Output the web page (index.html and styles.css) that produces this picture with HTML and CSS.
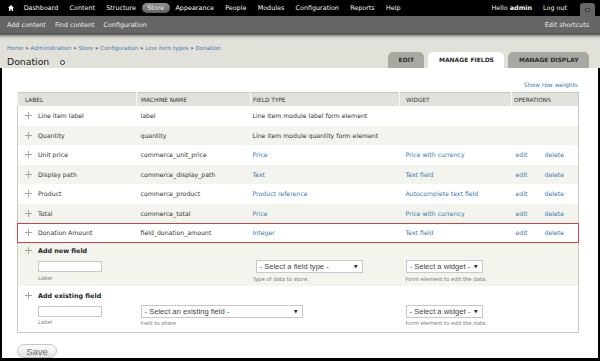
FILE: index.html
```html
<!DOCTYPE html>
<html lang="en">
<head>
  <meta charset="UTF-8">
  <title>Donation | Manage fields</title>
  <link rel="stylesheet" href="styles.css">
</head>
<body>
  <!-- Admin toolbar -->
  <div class="toolbar">
    <ul class="toolbar-menu">
      <li class="home">
        <a href="#"><svg width="6" height="6" viewBox="0 0 6 6"><path d="M3 0 L6 3 H5 V6 H3.6 V4.2 H2.4 V6 H1 V3 H0 Z" fill="#fff"/></svg></a>
      </li>
      <li><a href="#">Dashboard</a></li>
      <li><a href="#">Content</a></li>
      <li><a href="#">Structure</a></li>
      <li class="active"><a href="#">Store</a></li>
      <li><a href="#">Appearance</a></li>
      <li><a href="#">People</a></li>
      <li><a href="#">Modules</a></li>
      <li><a href="#">Configuration</a></li>
      <li><a href="#">Reports</a></li>
      <li><a href="#">Help</a></li>
    </ul>
    <div class="toolbar-user">
      <span>Hello <strong>admin</strong></span>
      <a class="logout" href="#">Log out</a>
      <span class="toggle"><span class="toggle-icon"></span></span>
    </div>
  </div>

  <div class="shortcuts">
    <div class="shortcut-links">
      <a href="#">Add content</a>
      <a href="#">Find content</a>
      <a href="#">Configuration</a>
    </div>
    <a href="#">Edit shortcuts</a>
  </div>

  <div class="branding">
    <div>
      <div class="breadcrumb">
        <a href="#">Home</a> <span class="sep">»</span> <a href="#">Administration</a> <span class="sep">»</span> <a href="#">Store</a> <span class="sep">»</span> <a href="#">Configuration</a> <span class="sep">»</span> <a href="#">Line item types</a> <span class="sep">»</span> <a href="#">Donation</a>
      </div>
      <h1>Donation <span class="gear"></span></h1>
    </div>
    <ul class="tabs">
      <li><a href="#">Edit</a></li>
      <li class="active"><a href="#">Manage fields</a></li>
      <li><a href="#">Manage display</a></li>
    </ul>
  </div>

  <div class="page">
    <div class="row-weights"><a href="#">Show row weights</a></div>

    <table class="fields">
      <colgroup>
        <col style="width: 119px">
        <col style="width: 114px">
        <col style="width: 149px">
        <col style="width: 112px">
        <col style="width: 29px">
        <col style="width: 38px">
      </colgroup>
      <thead>
        <tr>
          <th>Label</th>
          <th>Machine name</th>
          <th>Field type</th>
          <th>Widget</th>
          <th colspan="2">Operations</th>
        </tr>
      </thead>
      <tbody>
        <tr class="odd">
          <td><span class="handle"></span>Line item label</td>
          <td>label</td>
          <td>Line item module label form element</td>
          <td></td>
          <td></td>
          <td></td>
        </tr>
        <tr class="even">
          <td><span class="handle"></span>Quantity</td>
          <td>quantity</td>
          <td>Line item module quantity form element</td>
          <td></td>
          <td></td>
          <td></td>
        </tr>
        <tr class="odd">
          <td><span class="handle"></span>Unit price</td>
          <td>commerce_unit_price</td>
          <td><a href="#">Price</a></td>
          <td><a href="#">Price with currency</a></td>
          <td><a href="#">edit</a></td>
          <td><a href="#">delete</a></td>
        </tr>
        <tr class="even">
          <td><span class="handle"></span>Display path</td>
          <td>commerce_display_path</td>
          <td><a href="#">Text</a></td>
          <td><a href="#">Text field</a></td>
          <td><a href="#">edit</a></td>
          <td><a href="#">delete</a></td>
        </tr>
        <tr class="odd">
          <td><span class="handle"></span>Product</td>
          <td>commerce_product</td>
          <td><a href="#">Product reference</a></td>
          <td><a href="#">Autocomplete text field</a></td>
          <td><a href="#">edit</a></td>
          <td><a href="#">delete</a></td>
        </tr>
        <tr class="even">
          <td><span class="handle"></span>Total</td>
          <td>commerce_total</td>
          <td><a href="#">Price</a></td>
          <td><a href="#">Price with currency</a></td>
          <td><a href="#">edit</a></td>
          <td><a href="#">delete</a></td>
        </tr>
        <tr class="odd highlight">
          <td><span class="handle"></span>Donation Amount</td>
          <td>field_donation_amount</td>
          <td><a href="#">Integer</a></td>
          <td><a href="#">Text field</a></td>
          <td><a href="#">edit</a></td>
          <td><a href="#">delete</a></td>
        </tr>
        <tr class="even add-row add-new">
          <td>
            <div class="add-title"><span class="handle"></span>Add new field</div>
            <div class="field">
              <input type="text" class="text-input">
              <div class="desc">Label</div>
            </div>
          </td>
          <td></td>
          <td>
            <div class="field field-select">
              <span class="select type-select"><select><option>- Select a field type -</option></select></span>
              <div class="desc">Type of data to store.</div>
            </div>
          </td>
          <td>
            <div class="field field-select">
              <span class="select widget-select"><select><option>- Select a widget -</option></select></span>
              <div class="desc">Form element to edit the data.</div>
            </div>
          </td>
          <td colspan="2"></td>
        </tr>
        <tr class="odd add-row add-existing">
          <td>
            <div class="add-title"><span class="handle"></span>Add existing field</div>
            <div class="field">
              <input type="text" class="text-input">
              <div class="desc">Label</div>
            </div>
          </td>
          <td colspan="2">
            <div class="field field-select">
              <span class="select existing-select"><select><option>- Select an existing field -</option></select></span>
              <div class="desc">Field to share</div>
            </div>
          </td>
          <td>
            <div class="field field-select">
              <span class="select widget-select"><select><option>- Select a widget -</option></select></span>
              <div class="desc">Form element to edit the data.</div>
            </div>
          </td>
          <td colspan="2"></td>
        </tr>
      </tbody>
    </table>

    <button class="save">Save</button>
  </div>
</body>
</html>
```

FILE: styles.css
```css
body {
  margin: 0;
  font-family: "DejaVu Sans", Verdana, sans-serif;
  color: #333;
  background-color: #fff;
}

a {
  color: #3a78b2;
  text-decoration: none;
}

ul {
  list-style: none;
  margin: 0;
  padding: 0;
}

/* Toolbar */
.toolbar {
  display: flex;
  justify-content: space-between;
  align-items: center;
  height: 16px;
  padding: 0 5px 0 8px;
  background-color: #000;
  font-size: 6.4px;
  color: #f2f2f2;
}

.toolbar a {
  color: #f2f2f2;
}

.toolbar-menu {
  display: flex;
  align-items: center;
}

.toolbar-menu a {
  display: block;
  padding: 0 5.65px;
  line-height: 10px;
  border-radius: 5px;
}

.toolbar-menu .home a {
  display: flex;
  padding: 0 4px 0 0;
}

.toolbar-menu .active a {
  background: linear-gradient(#929292, #5f5f5f);
}

.toolbar-user {
  display: flex;
  align-items: center;
  align-self: stretch;
}

.toolbar-user .logout {
  margin-left: 11px;
}

.toggle {
  display: flex;
  align-items: center;
  justify-content: center;
  align-self: flex-end;
  width: 15px;
  height: 13px;
  margin-left: 13px;
  background-color: #666;
  border-radius: 3px 3px 0 0;
}

.toggle-icon {
  width: 5px;
  height: 4px;
  background-color: #3a3a3a;
  border-radius: 1px;
  box-shadow: inset 0 0 0 1.5px #3a3a3a, inset 0 0 0 3px #ddd;
}

/* Shortcuts bar */
.shortcuts {
  display: flex;
  justify-content: space-between;
  align-items: center;
  height: 17px;
  padding: 0 11px 0 7px;
  background-color: #666;
  font-size: 6.4px;
}

.shortcuts a {
  color: #eee;
}

.shortcut-links {
  display: flex;
  gap: 9px;
}

/* Branding */
.branding {
  display: flex;
  justify-content: space-between;
  align-items: flex-end;
  height: 35px;
  box-sizing: border-box;
  padding: 8px 11px 0 7px;
  background: linear-gradient(#3a3a3a, #c6c6bf 4px, #e1e1da 6px);
}

.breadcrumb {
  font-size: 5.6px;
  line-height: 8px;
}

.breadcrumb .sep {
  color: #333;
}

h1 {
  margin: 4px 0 0;
  font-size: 9.3px;
  line-height: 12px;
  font-weight: normal;
  color: #1a1a1a;
}

.gear {
  display: inline-block;
  width: 3px;
  height: 3px;
  margin-left: 8px;
  border: 1.3px solid #2a2a2a;
  border-radius: 50%;
  background-color: #fff;
  vertical-align: 0;
}

.tabs {
  display: flex;
  gap: 4px;
}

.tabs a {
  display: block;
  height: 16px;
  padding: 0 10.5px;
  line-height: 16px;
  border-radius: 5px 5px 0 0;
  background-color: #a9a9a4;
  color: #2a2a2a;
  font-size: 6px;
  font-weight: bold;
  text-transform: uppercase;
}

.tabs .active a {
  background-color: #fff;
}

/* Page content */
.page {
  height: 293px;
  box-sizing: border-box;
  padding: 12px 20px 0 15px;
  border: solid #000;
  border-width: 0 2px 3px;
}

.row-weights {
  text-align: right;
  font-size: 6px;
  line-height: 10px;
  margin-bottom: 2px;
}

.fields {
  width: 561px;
  table-layout: fixed;
  border-collapse: collapse;
  border: 1px solid #cacac5;
  font-size: 6.2px;
}

.fields th {
  height: 13px;
  padding: 0;
  background-color: #e1e2dc;
  border-left: 1px solid #f6f6f2;
  text-align: left;
  font-size: 5.8px;
  font-weight: normal;
  text-transform: uppercase;
  color: #333;
}

.fields td {
  padding: 0;
  white-space: nowrap;
}

.fields th:nth-child(1),
.fields td:nth-child(1) {
  padding-left: 7px;
}

.fields th:nth-child(2),
.fields td:nth-child(2) {
  padding-left: 4px;
}

.fields th:nth-child(3),
.fields td:nth-child(3) {
  padding-left: 2px;
}

.fields th:nth-child(4),
.fields td:nth-child(4) {
  padding-left: 6px;
}

.fields th:nth-child(5) {
  padding-left: 2px;
}

.fields td:nth-child(5),
.fields td:nth-child(6) {
  padding-left: 4px;
}

.fields tbody tr {
  height: 19.5px;
}

.fields tr.odd {
  background-color: #fff;
}

.fields tr.even {
  background-color: #f3f4ee;
}

.handle {
  display: inline-block;
  width: 7px;
  height: 7px;
  margin-right: 6px;
  vertical-align: -1px;
  background:
    linear-gradient(#a5a5a0, #a5a5a0) center / 1px 7px no-repeat,
    linear-gradient(#a5a5a0, #a5a5a0) center / 7px 1px no-repeat;
}

/* Highlighted row */
.highlight td {
  border-top: 1.5px solid #c9434b;
  border-bottom: 1.5px solid #c9434b;
}

.highlight td:first-child {
  border-left: 1.5px solid #c9434b;
}

.highlight td:last-child {
  border-right: 1.5px solid #c9434b;
}

/* Add field rows */
.fields tr.add-new {
  height: 43px;
}

.fields tr.add-existing {
  height: 47px;
}

.add-row td {
  vertical-align: top;
  padding-top: 4px;
}

.add-existing td {
  padding-top: 6px;
}

.add-existing td:nth-child(3) {
  padding-left: 6px;
}

.add-title {
  line-height: 8px;
  font-weight: bold;
  font-size: 6.4px;
  color: #222;
}

.field {
  margin: 6px 0 0 13px;
}

.field-select {
  margin: 13px 0 0;
}

.type-select {
  margin-left: 3px;
}

.text-input {
  display: block;
  width: 64px;
  height: 11px;
  box-sizing: border-box;
  margin: 0;
  border: 1px solid #c8c8c8;
  background-color: #fff;
}

.desc {
  margin-top: 2.5px;
  font-size: 5.3px;
  line-height: 7px;
  color: #7a7a7a;
}

.select {
  position: relative;
  display: inline-block;
}

.select select {
  -webkit-appearance: none;
  appearance: none;
  display: block;
  height: 13px;
  margin: 0;
  padding: 0 0 0 3px;
  border: 1px solid #c8c8c8;
  border-radius: 0;
  background-color: #fff;
  font: 7.6px "Liberation Sans", Arial, sans-serif;
  color: #444;
}

.select::after {
  content: "▼";
  position: absolute;
  right: 5px;
  top: 4px;
  font-size: 4.5px;
  line-height: 5px;
  color: #222;
  pointer-events: none;
}

.type-select select {
  width: 107px;
}

.widget-select select {
  width: 77px;
}

.existing-select select {
  width: 162px;
}

/* Save button */
.save {
  display: block;
  width: 40px;
  height: 14px;
  margin-top: 11px;
  padding: 0;
  border: 1px solid #c6c6c6;
  border-radius: 7px;
  background: linear-gradient(#fefefe, #e2e2e2);
  color: #6d6d6d;
  font: 9.5px "Liberation Sans", Arial, sans-serif;
}
```
